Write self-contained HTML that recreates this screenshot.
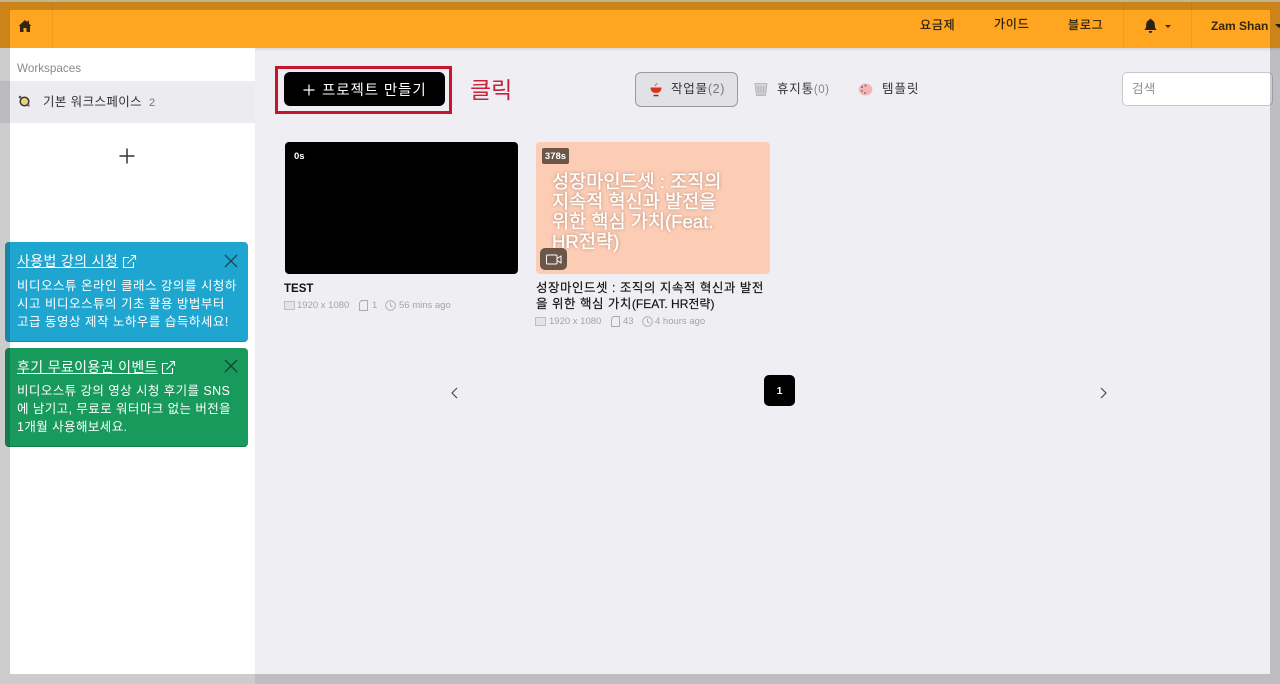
<!DOCTYPE html>
<html lang="ko"><head><meta charset="utf-8"><title>Projects</title>
<style>
*{box-sizing:border-box}
html,body{margin:0;padding:0;width:1280px;height:684px;overflow:hidden;background:#eeeef3}
body{font-family:"Liberation Sans","Noto Sans CJK KR",sans-serif;color:#212529;position:relative}
.a{position:absolute;white-space:nowrap}
.nav{font-size:12px;color:#2b2113;line-height:16px;letter-spacing:.8px;-webkit-text-stroke:.25px #2b2113}
.meta{font-size:9.5px;color:#a3a3a8;line-height:12px}
.card{border-radius:4px;color:#fff;left:5px;width:243px}
.card .t{position:absolute;left:12px;top:10px;font-size:14px;line-height:19px;letter-spacing:.35px;text-decoration:underline;white-space:nowrap}
.card .b{position:absolute;left:12px;font-size:12.5px;line-height:18.2px;white-space:nowrap;top:34px;letter-spacing:.5px}
svg{display:block}
.shade{position:absolute;background:rgba(0,0,0,.2);z-index:50}
</style></head><body>
<!-- header -->
<div class="a" style="left:0;top:0;width:1280px;height:48px;background:#ffa51f;box-shadow:0 1px 3px rgba(0,0,0,.12)"></div>
<div class="a" style="left:52px;top:0;width:1px;height:48px;background:#ef9a1c"></div>
<div class="a" style="left:1123px;top:0;width:1px;height:48px;background:#ef9a1c"></div>
<div class="a" style="left:1191px;top:0;width:1px;height:48px;background:#ef9a1c"></div>
<svg class="a" style="left:18px;top:19px" width="14" height="14" viewBox="0 0 14 14"><path d="M7 1 L0.6 7 L2 7 L2 13 L5.5 13 L5.5 9 L8.5 9 L8.5 13 L12 13 L12 7 L13.4 7 L11 4.8 L11 1.8 L9.5 1.8 L9.5 3.4 Z" fill="#332510"/></svg>
<div class="a nav" style="left:920px;top:17px">요금제</div>
<div class="a nav" style="left:994px;top:16px">가이드</div>
<div class="a nav" style="left:1068px;top:17px">블로그</div>
<svg class="a" style="left:1143px;top:18px" width="15" height="16" viewBox="0 0 15 16"><path d="M7.5 0.8 C8.3 0.8 8.6 1.4 8.6 2 C11 2.6 11.8 4.6 11.8 7 C11.8 9.6 12.6 10.8 13.6 12 L1.4 12 C2.4 10.8 3.2 9.6 3.2 7 C3.2 4.6 4 2.6 6.4 2 C6.4 1.4 6.7 0.8 7.5 0.8 Z M5.8 13 L9.2 13 C9.2 14.2 8.4 15 7.5 15 C6.6 15 5.8 14.2 5.8 13 Z" fill="#2b2113"/></svg>
<div class="a" style="left:1165px;top:25px;border-left:3.5px solid transparent;border-right:3.5px solid transparent;border-top:3.5px solid #3a2c14"></div>
<div class="a" style="left:1211px;top:18px;font-size:12px;font-weight:700;color:#33270f;line-height:17px">Zam Shan</div>
<div class="a" style="left:1275px;top:24px;border-left:4px solid transparent;border-right:4px solid transparent;border-top:4px solid #2b2113"></div>

<!-- sidebar -->
<div class="a" style="left:0;top:48px;width:255px;height:636px;background:#fff"></div>
<div class="a" style="left:17px;top:61px;font-size:11.7px;line-height:16px;color:#8a8a8a">Workspaces</div>
<div class="a" style="left:0;top:81px;width:255px;height:42px;background:#ebebf0"></div>
<svg class="a" style="left:18px;top:95px" width="13" height="13" viewBox="0 0 13 13"><circle cx="6.5" cy="6.5" r="4.3" fill="#e9d36a" stroke="#3b3440" stroke-width="1.5"/><circle cx="2" cy="2" r="1.3" fill="#57505f"/><circle cx="10.5" cy="10.5" r="1.2" fill="#7a5f9a"/></svg>
<div class="a" style="left:43px;top:93px;font-size:12.5px;line-height:18px;letter-spacing:.4px;color:#333">기본 워크스페이스</div>
<div class="a" style="left:149px;top:96px;font-size:11px;line-height:14px;color:#777">2</div>
<svg class="a" style="left:119px;top:148px" width="16" height="16" viewBox="0 0 16 16"><path d="M8 0.5V15.5M0.5 8H15.5" stroke="#333" stroke-width="1.5"/></svg>

<!-- info cards -->
<div class="a card" style="top:242px;height:100px;background:#1ea6d0;border-bottom:1px solid #178aae">
  <div class="t">사용법 강의 시청</div>
  <svg class="a" style="left:117px;top:12px" width="15" height="15" viewBox="0 0 15 15" fill="none" stroke="#fff" stroke-width="1.1"><path d="M7 3.5H1.5V13.5H11.5V8M5.5 9.5L13.5 1.5M9 1.5H13.5V6"/></svg>
  <svg class="a" style="left:219px;top:12px" width="14" height="14" viewBox="0 0 14 14"><path d="M1 1L13 13M13 1L1 13" stroke="#1d4a5c" stroke-width="1.4"/></svg>
  <div class="b" style="top:35px">비디오스튜 온라인 클래스 강의를 시청하<br>시고 비디오스튜의 기초 활용 방법부터<br>고급 동영상 제작 노하우를 습득하세요!</div>
</div>
<div class="a card" style="top:348px;height:99px;background:#179a5c;border-bottom:1px solid #0f7d49">
  <div class="t">후기 무료이용권 이벤트</div>
  <svg class="a" style="left:156px;top:12px" width="15" height="15" viewBox="0 0 15 15" fill="none" stroke="#fff" stroke-width="1.1"><path d="M7 3.5H1.5V13.5H11.5V8M5.5 9.5L13.5 1.5M9 1.5H13.5V6"/></svg>
  <svg class="a" style="left:219px;top:11px" width="14" height="14" viewBox="0 0 14 14"><path d="M1 1L13 13M13 1L1 13" stroke="#17472f" stroke-width="1.4"/></svg>
  <div class="b" style="letter-spacing:.42px">비디오스튜 강의 영상 시청 후기를 SNS<br>에 남기고, 무료로 워터마크 없는 버전을<br>1개월 사용해보세요.</div>
</div>

<!-- toolbar -->
<div class="a" style="left:275px;top:66px;width:177px;height:48px;border:3px solid #c8152d"></div>
<div class="a" style="left:284px;top:72px;width:161px;height:34px;background:#000;border-radius:6px"></div>
<svg class="a" style="left:303px;top:84px" width="12" height="12" viewBox="0 0 12 12"><path d="M6 0.5V11.5M0.5 6H11.5" stroke="#fff" stroke-width="1.2"/></svg>
<div class="a" style="left:322px;top:81px;font-size:14.5px;line-height:20px;letter-spacing:.9px;color:#fff">프로젝트 만들기</div>
<div class="a" style="left:470px;top:74px;font-size:23px;line-height:32px;color:#c8213a">클릭</div>

<div class="a" style="left:635px;top:72px;width:103px;height:35px;background:#e2e2e6;border:1px solid #9a9a9e;border-radius:6px"></div>
<svg class="a" style="left:649px;top:82px" width="14" height="15" viewBox="0 0 14 15"><path d="M1.5 5.5H12.5C12.5 9 10.5 11 7 11C3.5 11 1.5 9 1.5 5.5Z" fill="#d8341f"/><path d="M4.5 13.5H9.5" stroke="#8a3a20" stroke-width="1.6"/><path d="M6 4C6 2.5 8 2.5 8 1" stroke="#c4784a" stroke-width="1.1" fill="none"/></svg>
<div class="a" style="left:671px;top:80px;font-size:12.5px;line-height:18px;letter-spacing:.8px;color:#333">작업물<span style="color:#777;letter-spacing:.6px">(2)</span></div>
<svg class="a" style="left:754px;top:82px" width="14" height="15" viewBox="0 0 14 15"><path d="M1 1.5H13L11.5 13.5H2.5Z" fill="#d4d4d6" stroke="#b0b0b2" stroke-width=".8"/><path d="M4 4L5 13M7 4V13M10 4L9 13M2 6H12M2.5 9H11.5" stroke="#a8a8aa" stroke-width=".5"/></svg>
<div class="a" style="left:777px;top:80px;font-size:12.5px;line-height:18px;letter-spacing:.8px;color:#333">휴지통<span style="color:#888;font-size:11.5px;letter-spacing:.5px">(0)</span></div>
<svg class="a" style="left:858px;top:82px" width="15" height="15" viewBox="0 0 15 15"><ellipse cx="7.5" cy="7.5" rx="6.8" ry="6" fill="#f3b4b4"/><circle cx="4" cy="5" r="1" fill="#b04a78"/><circle cx="4" cy="9" r="1" fill="#5aa06a"/><circle cx="7.5" cy="3.5" r=".9" fill="#a74a4a"/><circle cx="7" cy="11" r=".9" fill="#6a5aa0"/></svg>
<div class="a" style="left:882px;top:80px;font-size:12.5px;line-height:18px;letter-spacing:1px;color:#333">템플릿</div>

<div class="a" style="left:1122px;top:72px;width:151px;height:34px;background:#fff;border:1px solid #c6c6ca;border-radius:5px"></div>
<div class="a" style="left:1132px;top:80px;font-size:12.5px;line-height:18px;letter-spacing:.3px;color:#8f8f8f">검색</div>

<!-- project 1 -->
<div class="a" style="left:285px;top:142px;width:233px;height:132px;background:#000;border-radius:4px"></div>
<div class="a" style="left:294px;top:151px;font-size:9.5px;font-weight:700;line-height:12px;color:#fff">0s</div>
<div class="a" style="left:284px;top:281px;font-size:11.5px;font-weight:700;line-height:16px;color:#111">TEST</div>
<svg class="a" style="left:284px;top:301px" width="11" height="9" viewBox="0 0 11 9"><rect x=".5" y=".5" width="10" height="8" fill="#e4e4e6" stroke="#b4b4b8" stroke-width=".8"/></svg>
<div class="a meta" style="left:297px;top:300px">1920 x 1080</div>
<svg class="a" style="left:359px;top:300px" width="9" height="11" viewBox="0 0 9 11"><path d="M2.5 .5H8.5V10.5H.5V2.5Z" fill="none" stroke="#a8a8ac" stroke-width=".9"/></svg>
<div class="a meta" style="left:372px;top:300px">1</div>
<svg class="a" style="left:385px;top:300px" width="11" height="11" viewBox="0 0 11 11" fill="none" stroke="#a8a8ac" stroke-width=".9"><circle cx="5.5" cy="5.5" r="4.8"/><path d="M5.5 2.5V5.7L7.5 7"/></svg>
<div class="a meta" style="left:399px;top:300px">56 mins ago</div>

<!-- project 2 -->
<div class="a" style="left:536px;top:142px;width:234px;height:132px;background:#fcccb4;border-radius:4px"></div>
<div class="a" style="left:542px;top:148px;width:27px;height:16px;background:#6b5648;border-radius:2px;font-size:9.5px;font-weight:700;line-height:17px;text-align:center;color:#fff">378s</div>
<div class="a" style="left:552px;top:172px;font-size:18.6px;line-height:20px;color:#fff;-webkit-text-stroke:.3px #fff;text-shadow:0 0 3px rgba(140,100,80,.8)">성장마인드셋 : 조직의<br>지속적 혁신과 발전을<br>위한 핵심 가치(Feat.<br>HR전략)</div>
<div class="a" style="left:540px;top:248px;width:27px;height:22px;background:#6b5648;border-radius:5px"></div>
<svg class="a" style="left:546px;top:254px" width="16" height="11" viewBox="0 0 16 11" fill="none" stroke="#fff" stroke-width="1"><rect x=".5" y="1" width="10.5" height="9" rx="1"/><path d="M11 4.5L15 2V9L11 6.5"/></svg>
<div class="a" style="left:536px;top:280px;font-size:12.5px;line-height:16px;letter-spacing:.5px;color:#111;-webkit-text-stroke:.15px #111">성장마인드셋 : 조직의 지속적 혁신과 발전<br>을 위한 핵심 가치<span style="font-size:12px;letter-spacing:0">(FEAT. HR전략)</span></div>
<svg class="a" style="left:535px;top:317px" width="11" height="9" viewBox="0 0 11 9"><rect x=".5" y=".5" width="10" height="8" fill="#e4e4e6" stroke="#b4b4b8" stroke-width=".8"/></svg>
<div class="a meta" style="left:549px;top:316px">1920 x 1080</div>
<svg class="a" style="left:611px;top:316px" width="9" height="11" viewBox="0 0 9 11"><path d="M2.5 .5H8.5V10.5H.5V2.5Z" fill="none" stroke="#a8a8ac" stroke-width=".9"/></svg>
<div class="a meta" style="left:623px;top:316px">43</div>
<svg class="a" style="left:642px;top:316px" width="11" height="11" viewBox="0 0 11 11" fill="none" stroke="#a8a8ac" stroke-width=".9"><circle cx="5.5" cy="5.5" r="4.8"/><path d="M5.5 2.5V5.7L7.5 7"/></svg>
<div class="a meta" style="left:655px;top:316px">4 hours ago</div>

<!-- pagination -->
<svg class="a" style="left:451px;top:387px" width="7" height="12" viewBox="0 0 7 12"><path d="M6 1L1 6L6 11" fill="none" stroke="#444" stroke-width="1.1"/></svg>
<div class="a" style="left:764px;top:375px;width:31px;height:31px;background:#000;border-radius:5px;color:#fff;font-size:10.5px;font-weight:700;line-height:33px;text-align:center">1</div>
<svg class="a" style="left:1100px;top:387px" width="7" height="12" viewBox="0 0 7 12"><path d="M1 1L6 6L1 11" fill="none" stroke="#444" stroke-width="1.1"/></svg>

<!-- dim frame -->
<div class="shade" style="left:0;top:0;width:1280px;height:10px"></div>
<div class="shade" style="left:0;top:0;width:1280px;height:2px;background:rgba(190,190,170,.85)"></div>
<div class="shade" style="left:0;top:674px;width:1280px;height:10px"></div>
<div class="shade" style="left:0;top:10px;width:10px;height:664px"></div>
<div class="shade" style="left:1270px;top:10px;width:10px;height:664px"></div>
</body></html>
